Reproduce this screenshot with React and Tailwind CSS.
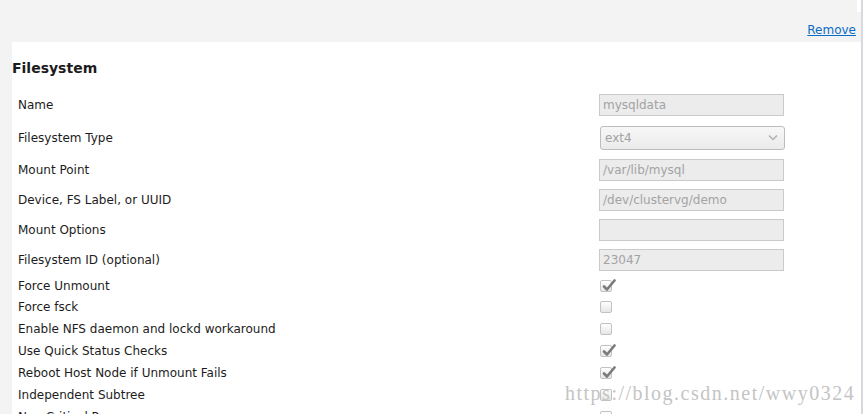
import React from 'react';

const textRows = [
  { label: 'Name', value: 'mysqldata', h: 'h-[32px]' },
  { label: 'Filesystem Type', select: 'ext4', h: 'h-[33px]' },
  { label: 'Mount Point', value: '/var/lib/mysql', h: 'h-[31px]' },
  { label: 'Device, FS Label, or UUID', value: '/dev/clustervg/demo', h: 'h-[30px]' },
  { label: 'Mount Options', value: '', h: 'h-[30px]' },
  { label: 'Filesystem ID (optional)', value: '23047', h: 'h-[30px]' },
];

const checkRows = [
  { label: 'Force Unmount', checked: true, h: 'h-[21px]' },
  { label: 'Force fsck', checked: false, h: 'h-[22px]' },
  { label: 'Enable NFS daemon and lockd workaround', checked: false, h: 'h-[22px]' },
  { label: 'Use Quick Status Checks', checked: true, h: 'h-[22px]' },
  { label: 'Reboot Host Node if Unmount Fails', checked: true, h: 'h-[22px]' },
  { label: 'Independent Subtree', checked: false, h: 'h-[22px]' },
  { label: 'Non Critical Resource', checked: false, h: 'h-[22px]' },
];

function Checkbox({ checked }) {
  return (
    <div className="relative w-[12px] h-[12px] rounded-[2px] border border-[#c2c2c2] bg-gradient-to-b from-white to-[#e6e6e6]">
      {checked && (
        <svg className="absolute left-[1px] top-[-3px]" width="14" height="14" viewBox="0 0 14 14">
          <path d="M2 8.5 L5 11.5 L12.5 2.5" fill="none" stroke="#7b7b7b" strokeWidth="2.6" strokeLinecap="round" strokeLinejoin="round" />
        </svg>
      )}
    </div>
  );
}

export default function App() {
  return (
    <div className="relative h-[414px] w-[865px] overflow-hidden flex bg-white text-[#1c1c1c]" style={{ fontFamily: '"DejaVu Sans", Verdana, sans-serif' }}>
      <div className="w-[861px] bg-[#f3f3f3] flex flex-col">
        <div className="h-[42px] shrink-0 flex flex-col">
          <div className="h-[12px] flex justify-end">
            <div className="w-[4px] bg-white" />
          </div>
          <div className="flex-1 flex justify-end items-center pr-[5px] pt-[6px]">
            <a href="#" className="text-[12px] text-[#0a6cc4] underline leading-none">Remove</a>
          </div>
        </div>

        <div className="ml-[12px] flex-1 shrink-0 bg-white">
          <h3 className="pt-[18px] pb-[12px] text-[14px] font-bold leading-[17px]">Filesystem</h3>

          {textRows.map(r => (
            <div key={r.label} className={`${r.h} shrink-0 flex items-center`}>
              <div className="w-[587px] pl-[6px] text-[12px]">{r.label}</div>
              {r.select ? (
                <div className="ml-[1px] w-[185px] h-[24px] rounded-[3px] border border-[#bdbdbd] bg-gradient-to-b from-[#f7f7f7] to-[#ebebeb] flex items-center justify-between pl-[4px] pr-[6px] text-[12px] text-[#a3a3a3]">
                  <span>{r.select}</span>
                  <svg width="10" height="7" viewBox="0 0 10 7">
                    <path d="M1 1.5 L5 5.5 L9 1.5" fill="none" stroke="#b0b0b0" strokeWidth="1.5" />
                  </svg>
                </div>
              ) : (
                <div className="w-[185px] h-[22px] border border-[#cacaca] bg-[#ececec] flex items-center px-[3px] text-[12px] text-[#a3a3a3]">
                  {r.value}
                </div>
              )}
            </div>
          ))}

          {checkRows.map(r => (
            <div key={r.label} className={`${r.h} shrink-0 flex items-center`}>
              <div className="w-[588px] pl-[6px] text-[12px]">{r.label}</div>
              <Checkbox checked={r.checked} />
            </div>
          ))}
        </div>
      </div>
      <div className="w-[2px] bg-[#d6dadf]" />
      <div className="flex-1 bg-white" />

      <div className="absolute left-[565px] top-[382px] text-[20px] leading-[22px] tracking-[1.5px] text-[#c4c4c4] pointer-events-none" style={{ fontFamily: '"Liberation Serif", serif' }}>
        https://blog.csdn.net/wwy0324
      </div>
    </div>
  );
}
